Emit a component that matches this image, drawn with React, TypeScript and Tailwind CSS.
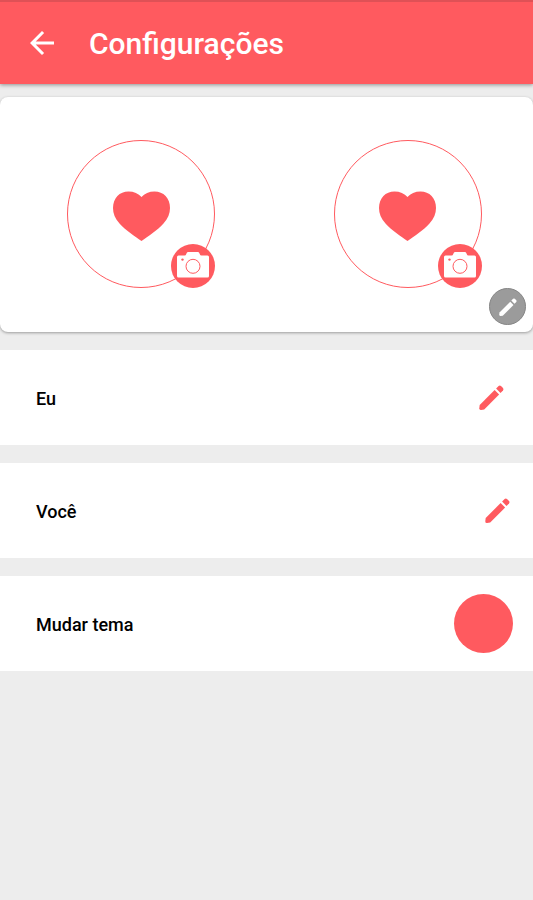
import { MdArrowBack } from 'react-icons/md';

const people = [
  { id: 'eu', name: 'Eu', inset: 'pr-[29px]' },
  { id: 'voce', name: 'Você', inset: 'pr-[23px]' },
];

function Pencil({ className }: { className: string }) {
  return (
    <svg viewBox="0 0 25 25" className={className} fill="currentColor" aria-hidden="true">
      <path d="M0.7 20 15.6 5.1 20.1 9.6 5.2 24.5 2 24.9Q0.2 25 0.3 23.2Z" />
      <path d="M17.1 3.6 19.6 1.1Q20.8 0 22 1.1L24 3.1Q25 4.3 24 5.5L21.5 8Z" />
    </svg>
  );
}

function Photo({ name }: { name: string }) {
  return (
    <div className="flex flex-1 justify-center pl-4">
      <div className="relative flex size-[148px] items-center justify-center rounded-full border border-[#ff5a5f]">
        <svg viewBox="0 -4 57 54" className="h-[54px] w-[57px] fill-[#ff5a5f]" aria-hidden="true">
          <path d="M28.5 50C22 45.2 12.5 39.5 6.5 32.5C2 27.5 0 22.5 0 17C0 7 6.5 0.5 15.5 0.5C20.8 0.5 25.5 2.5 28.5 6C31.5 2.5 36.2 0.5 41.5 0.5C50.5 0.5 57 7 57 17C57 22.5 55 27.5 50.5 32.5C44.5 39.5 35 45.2 28.5 50Z" />
        </svg>
        <button
          type="button"
          aria-label={`Foto: ${name}`}
          className="absolute -right-px -bottom-px size-11 rounded-full bg-[#ff5a5f]"
        >
          <svg viewBox="0 0 44 44" className="size-11" aria-hidden="true">
            <path
              d="M7.5 11.5H13.5Q14.8 11.5 15.3 10L15.7 9Q16.1 8 17.2 8H26.8Q27.9 8 28.3 9L28.7 10Q29.2 11.5 30.5 11.5H36.5Q38 11.5 38 13V32Q38 33.5 36.5 33.5H7.5Q6 33.5 6 32V13Q6 11.5 7.5 11.5Z"
              fill="#fff"
            />
            <circle cx="22" cy="22.3" r="7" fill="none" stroke="#ff5a5f" />
            <circle cx="11.5" cy="15.6" r="1.2" fill="#ff5a5f" />
          </svg>
        </button>
      </div>
    </div>
  );
}

export default function App() {
  return (
    <div className="min-h-screen bg-[#ededed] font-['Roboto','Liberation_Sans',sans-serif] text-black">
      <header className="flex h-[84px] items-center gap-[29px] border-t-2 border-[#df5156] bg-[#ff5a5f] pl-6 text-white shadow-[0_1px_4px_rgba(0,0,0,0.4)]">
        <button type="button" aria-label="Voltar">
          <MdArrowBack className="size-9" />
        </button>
        <h1 className="pt-0.5 text-[30px] leading-9 font-medium">Configurações</h1>
      </header>

      <main className="flex flex-col gap-[18px] pt-[13px]">
        <section className="relative flex rounded-lg bg-white pt-[43px] pb-11 shadow-[0_1px_3px_rgba(0,0,0,0.35)]">
          {people.map((p) => (
            <Photo key={p.id} name={p.name} />
          ))}
          <button
            type="button"
            aria-label="Editar fotos"
            className="absolute right-[7px] bottom-[7px] flex size-[37px] items-center justify-center rounded-full border border-[#858585] bg-[#9b9b9b] text-white"
          >
            <Pencil className="size-[18px]" />
          </button>
        </section>

        {people.map((p) => (
          <section key={p.id} className={`flex h-[95px] items-center justify-between bg-white pl-9 ${p.inset}`}>
            <h2 className="pt-0.5 text-lg font-medium">{p.name}</h2>
            <button type="button" aria-label={`Editar ${p.name}`} className="text-[#ff5a5f]">
              <Pencil className="size-[25px]" />
            </button>
          </section>
        ))}

        <section className="flex h-[95px] items-center justify-between bg-white pr-5 pl-9">
          <h2 className="pt-0.5 text-lg font-medium">Mudar tema</h2>
          <button type="button" aria-label="Mudar tema" className="size-[59px] rounded-full bg-[#ff5a5f]" />
        </section>
      </main>
    </div>
  );
}
